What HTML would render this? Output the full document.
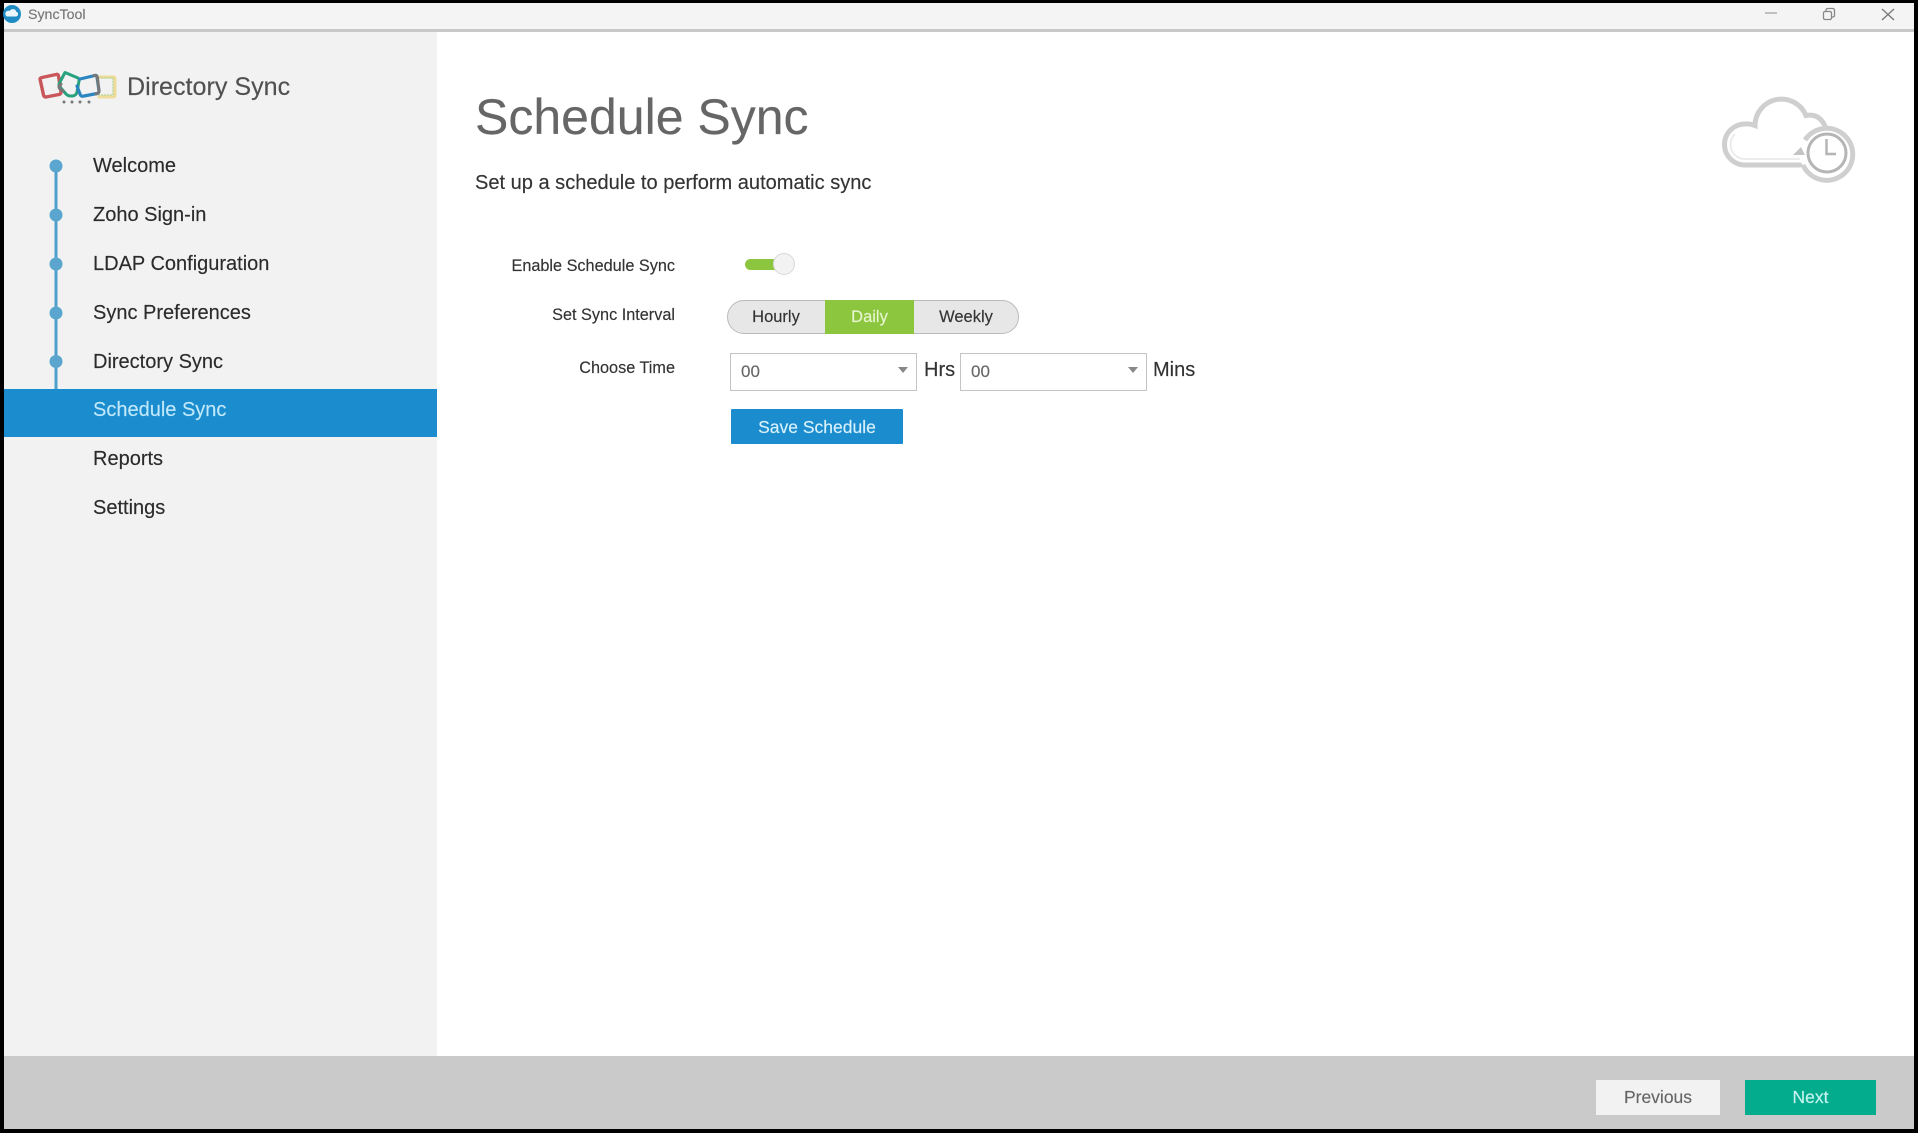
<!DOCTYPE html>
<html><head><meta charset="utf-8"><title>SyncTool</title>
<style>
*{box-sizing:border-box}
html,body{margin:0;padding:0;width:1918px;height:1133px;overflow:hidden;background:#000;font-family:"Liberation Sans",sans-serif}
.a{position:absolute}
.t{position:absolute;white-space:nowrap;line-height:30px;height:30px;-webkit-text-stroke:.15px currentColor}
.nav{font-size:20px;color:#2b2b2b;left:93px}
.lab{font-size:16.25px;color:#333;right:1243px;text-align:right}
.seg{font-size:16.5px;color:#333;text-align:center;height:30px}
.sel{position:absolute;top:352.5px;height:38px;width:187px;background:#fff;border:1.5px solid #c4c4c4}
.val{font-size:17px;color:#666}
.arr{position:absolute;width:0;height:0;border-left:5px solid transparent;border-right:5px solid transparent;border-top:6px solid #888}
</style></head><body>
<div class="a" style="left:3.5px;top:3px;width:1910.5px;height:26px;background:#f4f4f4"></div>
<div class="a" style="left:3.5px;top:29px;width:1910.5px;height:3px;background:#c8c8c8"></div>
<div class="a" style="left:3.5px;top:32px;width:1910.5px;height:1024px;background:#fff"></div>
<div class="a" style="left:3.5px;top:32px;width:433.5px;height:1024px;background:#f2f2f2"></div>
<div class="a" style="left:3.5px;top:1056px;width:1910.5px;height:73px;background:#cacaca"></div>
<div class="a" style="left:3.5px;top:389px;width:433.5px;height:48px;background:#1b8ccd"></div>

<div class="t" style="left:28px;top:1px;font-size:14.2px;color:#777;height:29px;line-height:29px">SyncTool</div>
<div class="t" style="left:127px;top:72px;font-size:25.1px;color:#505050">Directory Sync</div>

<div class="t nav" style="top:151px">Welcome</div>
<div class="t nav" style="top:200px">Zoho Sign-in</div>
<div class="t nav" style="top:249px">LDAP Configuration</div>
<div class="t nav" style="top:298px">Sync Preferences</div>
<div class="t nav" style="top:346.5px">Directory Sync</div>
<div class="t nav" style="top:395px;color:#bfe8fa">Schedule Sync</div>
<div class="t nav" style="top:444px">Reports</div>
<div class="t nav" style="top:493px">Settings</div>

<div class="t" style="left:475px;top:87px;font-size:50px;color:#666;height:60px;line-height:60px">Schedule Sync</div>
<div class="t" style="left:475px;top:168px;font-size:20.05px;color:#333">Set up a schedule to perform automatic sync</div>

<div class="t lab" style="top:251px">Enable Schedule Sync</div>
<div class="t lab" style="top:300px">Set Sync Interval</div>
<div class="t lab" style="top:352.5px">Choose Time</div>

<div class="a" style="left:745px;top:259px;width:38px;height:11px;border-radius:6px;background:#8cc63f"></div>
<div class="a" style="left:773px;top:253px;width:22px;height:22px;border-radius:50%;background:#f2f2f2;border:1.5px solid #d8d8d8"></div>

<div class="a" style="left:727px;top:300px;width:292px;height:34px;border-radius:17px;background:#e7e7e7;border:1.5px solid #bbb"></div>
<div class="a" style="left:825px;top:300px;width:89px;height:34px;background:#8cc63f"></div>
<div class="t seg" style="left:727px;width:98px;top:302px">Hourly</div>
<div class="t seg" style="left:825px;width:89px;top:302px;color:#e8f5d0">Daily</div>
<div class="t seg" style="left:915px;width:102px;top:302px">Weekly</div>

<div class="sel" style="left:730px"></div>
<div class="sel" style="left:960px"></div>
<div class="t val" style="left:741px;top:356.5px">00</div>
<div class="t val" style="left:971px;top:356.5px">00</div>
<div class="arr" style="left:898px;top:367px"></div>
<div class="arr" style="left:1128px;top:367px"></div>
<div class="t" style="left:924px;top:355px;font-size:20px;color:#333">Hrs</div>
<div class="t" style="left:1153px;top:355px;font-size:20px;color:#333">Mins</div>

<div class="a" style="left:731px;top:409px;width:172px;height:35px;background:#1b8ccd;border-radius:1px"></div>
<div class="t" style="left:731px;top:412px;width:172px;text-align:center;font-size:17.5px;color:#d8f1fc">Save Schedule</div>

<div class="a" style="left:1596px;top:1080px;width:124px;height:35px;background:#f2f2f2"></div>
<div class="t" style="left:1596px;top:1082px;width:124px;text-align:center;font-size:17.5px;color:#666">Previous</div>
<div class="a" style="left:1745px;top:1080px;width:131px;height:35px;background:#04ac8e"></div>
<div class="t" style="left:1745px;top:1082px;width:131px;text-align:center;font-size:17.5px;color:#c5f4f0">Next</div>

<svg class="a" style="left:0;top:0" width="1918" height="1133" viewBox="0 0 1918 1133" fill="none">
  <!-- app icon -->
  <circle cx="12" cy="14" r="9" fill="#1f8bc4"/>
  <path d="M7 16.5h9a2.400 2.400 0 0 0 .3-4.700a3.500 3.500 0 0 0-6.500-.8a2.800 2.800 0 0 0-2.800 5.500z" fill="#eaf5fb"/>
  <!-- window controls -->
  <path d="M1765 13H1777" stroke="#aaa" stroke-width="1.4"/>
  <rect x="1823.5" y="11.5" width="8" height="8" rx="1.5" stroke="#888" stroke-width="1.3"/>
  <path d="M1826 11V10a1.500 1.500 0 0 1 1.500-1.500H1833a1.500 1.500 0 0 1 1.500 1.500V15.500a1.500 1.500 0 0 1-1.500 1.500H1832" stroke="#888" stroke-width="1.3"/>
  <path d="M1882 9L1894 20M1894 9L1882 20" stroke="#777" stroke-width="1.3"/>
  <!-- zoho logo -->
  <g stroke-linejoin="round" stroke-linecap="round">
    <path d="M97 77H114Q115 77 115 79V95Q115 97 113 97H99" stroke="#f0dc9a" stroke-width="3"/>
    <path d="M98 78H113V95H98" stroke="#a9cf8a" stroke-width="1" stroke-dasharray="1.500 1.500"/>
    <path d="M40 79Q40 78 42 77.500L56 74.500Q58 74 58.500 76L61 92Q61 94 59 94.500L46 97Q44 97 43.500 95Z" stroke="#c9575a" stroke-width="3.400"/>
    <path d="M65 72.500L78 78Q79.500 79 79 81L77 92Q76.500 95 73 96L70 96Q68 96 66 94L60 87Q58 85 60 82Z" stroke="#27a27c" stroke-width="3"/>
    <path d="M80 79L95 75.500Q97 75 97 77L99 91Q99 93 97 93.500L84 96Q81 97 80 94L77 86" stroke="#2b86c0" stroke-width="3.200"/>
    <path d="M94 75.500Q97 75 97.500 78L99 91Q99 93.500 96 94" stroke="#777" stroke-width="3"/>
    <path d="M61 84Q57.500 86 60 89L63 91" stroke="#777" stroke-width="3"/>
  </g>
  <g fill="#777"><circle cx="64" cy="102" r="1.500"/><circle cx="72" cy="102" r="1.500"/><circle cx="80" cy="102" r="1.500"/><circle cx="89" cy="102" r="1.500"/></g>
  <!-- nav timeline -->
  <path d="M56 166V389" stroke="#4f9fca" stroke-width="3"/>
  <g fill="#5aa6cf"><circle cx="56" cy="166" r="6.500"/><circle cx="56" cy="215" r="6.500"/><circle cx="56" cy="264" r="6.500"/><circle cx="56" cy="313" r="6.500"/><circle cx="56" cy="361.500" r="6.500"/></g>
  <!-- cloud clock icon -->
  <path d="M1800 165H1745A20.500 20.500 0 0 1 1745 124Q1750 123.500 1755 125.500A26.500 26.500 0 0 1 1806 115.500Q1819 113 1825 126" stroke="#cfcfcf" stroke-width="5" stroke-linecap="round"/>
  <path d="M1800 159H1746A14.500 14.500 0 0 1 1735 134" stroke="#e6e6e6" stroke-width="1.500"/>
  <path d="M1805 140A26 26 0 1 1 1803 165" stroke="#cfcfcf" stroke-width="5"/>
  <path d="M1793 155H1805L1801 147Z" fill="#c4c4c4"/>
  <circle cx="1827" cy="153" r="19" stroke="#b5b5b5" stroke-width="3"/>
  <path d="M1826.500 139V154H1836" stroke="#b5b5b5" stroke-width="2.500"/>
</svg>
</body></html>
